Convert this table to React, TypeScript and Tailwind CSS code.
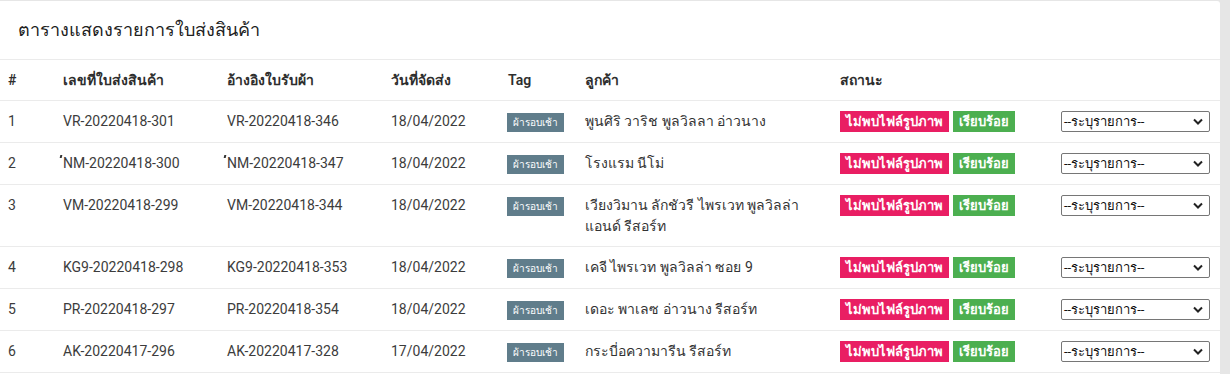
import React from "react";

type Delivery = {
  no: number;
  docNo: string;
  refNo: string;
  date: string;
  tag: string;
  customer: string;
  mark?: boolean;
};

const rows: Delivery[] = [
  { no: 1, docNo: "VR-20220418-301", refNo: "VR-20220418-346", date: "18/04/2022", tag: "ผ้ารอบเช้า", customer: "พูนศิริ วาริช พูลวิลลา อ่าวนาง" },
  { no: 2, docNo: "NM-20220418-300", refNo: "NM-20220418-347", date: "18/04/2022", tag: "ผ้ารอบเช้า", customer: "โรงแรม นีโม่", mark: true },
  { no: 3, docNo: "VM-20220418-299", refNo: "VM-20220418-344", date: "18/04/2022", tag: "ผ้ารอบเช้า", customer: "เวียงวิมาน ลักชัวรี ไพรเวท พูลวิลล่า แอนด์ รีสอร์ท" },
  { no: 4, docNo: "KG9-20220418-298", refNo: "KG9-20220418-353", date: "18/04/2022", tag: "ผ้ารอบเช้า", customer: "เคจี ไพรเวท พูลวิลล่า ซอย 9" },
  { no: 5, docNo: "PR-20220418-297", refNo: "PR-20220418-354", date: "18/04/2022", tag: "ผ้ารอบเช้า", customer: "เดอะ พาเลซ อ่าวนาง รีสอร์ท" },
  { no: 6, docNo: "AK-20220417-296", refNo: "AK-20220417-328", date: "17/04/2022", tag: "ผ้ารอบเช้า", customer: "กระบี่อความารีน รีสอร์ท" },
];

const Chevron = () => (
  <svg width="10" height="7" viewBox="0 0 10 7" fill="none">
    <polyline points="1,1.5 5,5.5 9,1.5" stroke="#222" strokeWidth="2" />
  </svg>
);

const Mark = () => (
  <span className="inline-block w-[2px] h-[3px] bg-[#333] align-top mt-[2px] mr-[1px] -ml-[3px] -skew-x-12" />
);

const App = () => {
  return (
    <div className="w-[1230px] h-[374px] bg-[#e6e6e6] pt-[1px] overflow-hidden font-['Roboto','Noto_Sans',sans-serif]">
      <div className="w-[1220px] h-[373px] bg-white rounded-tr-[3px]">
        {/* header */}
        <div className="px-[18px] py-[18px] border-b border-[#ebebeb]">
          <h4 className="text-[18px] leading-[22px] text-[#212121]">ตารางแสดงรายการใบส่งสินค้า</h4>
        </div>

        <table className="w-[1220px] table-fixed border-collapse text-[14px] text-[#3c3c3c]">
          <colgroup>
            <col className="w-[55px]" />
            <col className="w-[164px]" />
            <col className="w-[164px]" />
            <col className="w-[117px]" />
            <col className="w-[77px]" />
            <col className="w-[255px]" />
            <col className="w-[221px]" />
            <col className="w-[167px]" />
          </colgroup>
          <thead>
            <tr className="border-b border-[#ebebeb] text-left text-[#2e2e2e]">
              <th className="px-[8px] py-[10px] leading-[20px] font-semibold">#</th>
              <th className="px-[8px] py-[10px] leading-[20px] font-semibold">เลขที่ใบส่งสินค้า</th>
              <th className="px-[8px] py-[10px] leading-[20px] font-semibold">อ้างอิงใบรับผ้า</th>
              <th className="px-[8px] py-[10px] leading-[20px] font-semibold">วันที่จัดส่ง</th>
              <th className="px-[8px] py-[10px] leading-[20px] font-semibold">Tag</th>
              <th className="px-[8px] py-[10px] leading-[20px] font-semibold">ลูกค้า</th>
              <th className="px-[8px] py-[10px] leading-[20px] font-semibold">สถานะ</th>
              <th className="px-[8px] py-[10px] leading-[20px] font-semibold"></th>
            </tr>
          </thead>
          <tbody>
            {rows.map((r) => (
              <tr key={r.no} className="border-b border-[#ebebeb] align-top">
                <td className="px-[8px] py-[10px] leading-[20.5px]">{r.no}</td>
                <td className="px-[8px] py-[10px] leading-[20.5px]">
                  {r.mark && <Mark />}
                  {r.docNo}
                </td>
                <td className="px-[8px] py-[10px] leading-[20.5px]">
                  {r.mark && <Mark />}
                  {r.refNo}
                </td>
                <td className="px-[8px] py-[10px] leading-[20.5px]">{r.date}</td>
                <td className="px-[7px] py-[10px] leading-[20.5px]">
                  <span className="inline-block mt-[2px] w-[57px] h-[19px] leading-[19px] text-center bg-[#607d8b] text-white text-[10px]">
                    {r.tag}
                  </span>
                </td>
                <td className="px-[8px] py-[10px] leading-[20.5px] text-[#333]">{r.customer}</td>
                <td className="px-[8px] py-[10px]">
                  <div className="flex gap-[4px]">
                    <span className="w-[109px] h-[21px] leading-[21px] text-center bg-[#e91e63] text-white text-[13px] font-bold">
                      ไม่พบไฟล์รูปภาพ
                    </span>
                    <span className="w-[62px] h-[21px] leading-[21px] text-center bg-[#4caf50] text-white text-[13px] font-bold">
                      เรียบร้อย
                    </span>
                  </div>
                </td>
                <td className="px-[8px] py-[10px]">
                  <div className="w-[149px] h-[21px] flex items-center justify-between border border-[#767676] rounded-[2px] pl-[2px] pr-[6px] text-[13px] text-[#111]">
                    <span>--ระบุรายการ--</span>
                    <Chevron />
                  </div>
                </td>
              </tr>
            ))}
          </tbody>
        </table>
      </div>
    </div>
  );
};

export default App;
